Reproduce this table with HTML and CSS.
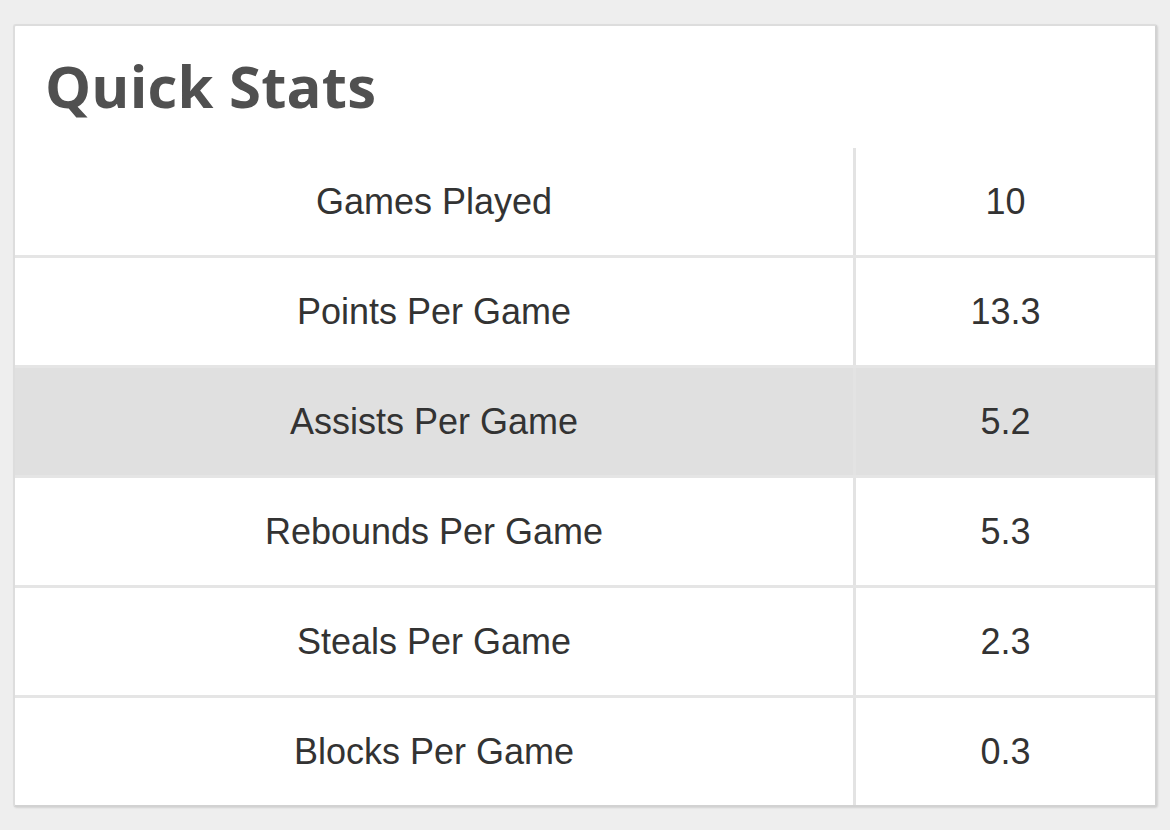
FILE: index.html
```html
<!DOCTYPE html>
<html>
<head>
<meta charset="utf-8">
<link rel="stylesheet" href="styles.css">
</head>
<body>
<div class="card">
  <div class="card-header"><h2 class="title">Quick Stats</h2></div>
  <div class="stats">
    <div class="row"><div class="label">Games Played</div><div class="val">10</div></div>
    <div class="row"><div class="label">Points Per Game</div><div class="val">13.3</div></div>
    <div class="row hl"><div class="label">Assists Per Game</div><div class="val">5.2</div></div>
    <div class="row"><div class="label">Rebounds Per Game</div><div class="val">5.3</div></div>
    <div class="row"><div class="label">Steals Per Game</div><div class="val">2.3</div></div>
    <div class="row"><div class="label">Blocks Per Game</div><div class="val">0.3</div></div>
  </div>
</div>
</body>
</html>
```
FILE: styles.css
```css
html, body {
  margin: 0;
  padding: 0;
  background: #eeeeee;
}
body {
  padding: 24px 13px 0 13px;
  height: 830px;
  box-sizing: border-box;
}
.card {
  width: 1144px;
  box-sizing: border-box;
  background: #ffffff;
  border: 2px solid #dddddd;
  border-right-color: #d2d2d2;
  border-bottom-color: #d2d2d2;
  border-radius: 3px;
  box-shadow: 1px 1px 2px rgba(0,0,0,0.12);
}
.card-header {
  height: 122px;
  padding: 0 0 0 30px;
  box-sizing: border-box;
}
.title {
  margin: 0;
  padding-top: 20px;
  font-family: "Open Sans", "Noto Sans", sans-serif;
  font-weight: 700;
  font-size: 58px;
  line-height: 80px;
  color: #505050;
  letter-spacing: 0.2px;
}
.stats {
  font-family: "Liberation Sans", Arial, sans-serif;
  font-size: 36px;
  color: #333333;
}
.row {
  display: grid;
  grid-template-columns: 838px 1fr;
  height: 110px;
  border-top: 3px solid #e5e5e5;
  box-sizing: border-box;
}
.row:first-child {
  border-top: none;
  height: 107px;
}
.row.hl {
  background: #e0e0e0;
}
.label, .val {
  display: flex;
  align-items: center;
  justify-content: center;
}
.val {
  border-left: 3px solid #e3e3e3;
}
```
